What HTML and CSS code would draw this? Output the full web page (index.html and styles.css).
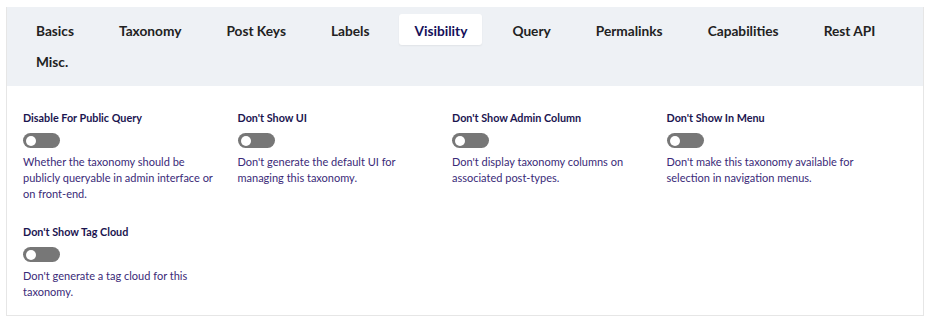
FILE: index.html
```html
<!DOCTYPE html>
<html>
<head>
    <title>Taxonomy Visibility</title>
    <meta name="viewport" content="width=device-width, initial-scale=1.0">
    <link rel="stylesheet" href="styles.css">
</head>
<body>
    <div class="panel">
        <!-- Abas -->
        <div class="tabs">
            <a class="tab">Basics</a>
            <a class="tab">Taxonomy</a>
            <a class="tab">Post Keys</a>
            <a class="tab">Labels</a>
            <a class="tab active">Visibility</a>
            <a class="tab">Query</a>
            <a class="tab">Permalinks</a>
            <a class="tab">Capabilities</a>
            <a class="tab">Rest API</a>
            <a class="tab">Misc.</a>
        </div>

        <!-- Campos -->
        <div class="fields">
            <div class="field">
                <div class="field-label">Disable For Public Query</div>
                <label class="switch"><input type="checkbox"><span class="slider"></span></label>
                <p class="field-desc">Whether the taxonomy should be publicly queryable in admin interface or on front-end.</p>
            </div>
            <div class="field">
                <div class="field-label">Don't Show UI</div>
                <label class="switch"><input type="checkbox"><span class="slider"></span></label>
                <p class="field-desc">Don't generate the default UI for managing this taxonomy.</p>
            </div>
            <div class="field">
                <div class="field-label">Don't Show Admin Column</div>
                <label class="switch"><input type="checkbox"><span class="slider"></span></label>
                <p class="field-desc">Don't display taxonomy columns on associated post-types.</p>
            </div>
            <div class="field">
                <div class="field-label">Don't Show In Menu</div>
                <label class="switch"><input type="checkbox"><span class="slider"></span></label>
                <p class="field-desc">Don't make this taxonomy available for selection in navigation menus.</p>
            </div>
            <div class="field">
                <div class="field-label">Don't Show Tag Cloud</div>
                <label class="switch"><input type="checkbox"><span class="slider"></span></label>
                <p class="field-desc">Don't generate a tag cloud for this taxonomy.</p>
            </div>
        </div>
    </div>
</body>
</html>
```

FILE: styles.css
```css
body {
    font-family: Lato, "Noto Sans", sans-serif;
    margin: 0;
    padding: 7px 6px 0 6px;
    background: #fff;
}

.panel {
    width: 916px;
    border: 1px solid #e6e6e6;
    border-top: none;
}

.tabs {
    display: flex;
    flex-wrap: wrap;
    column-gap: 15px;
    padding: 7px 14px 10px 14px;
    background-color: #eef1f5;
}

.tab {
    display: block;
    height: 31px;
    line-height: 33px;
    padding: 0 15px;
    font-size: 13.7px;
    font-weight: 700;
    color: #222;
    border-radius: 3px;
    cursor: pointer;
}

.tab.active {
    background-color: #fff;
    color: #15105a;
    box-shadow: 0 1px 2px rgba(0, 0, 0, 0.06);
}

.fields {
    display: grid;
    grid-template-columns: repeat(4, 194px);
    column-gap: 20.5px;
    row-gap: 22px;
    padding: 24px 16px 15px 16px;
}

.field-label {
    font-size: 10.8px;
    font-weight: 700;
    line-height: 16px;
    color: #1b1550;
}

.switch {
    display: block;
    position: relative;
    width: 37px;
    height: 15px;
    margin-top: 7px;
}

.switch input {
    display: none;
}

.slider {
    position: absolute;
    inset: 0;
    background-color: #777;
    border-radius: 8px;
}

.slider::before {
    content: "";
    position: absolute;
    left: 3px;
    top: 2.5px;
    width: 10px;
    height: 10px;
    border-radius: 50%;
    background-color: #fff;
}

.field-desc {
    margin: 6px 0 0 0;
    font-size: 11px;
    line-height: 16px;
    color: #3a2a78;
}
```
